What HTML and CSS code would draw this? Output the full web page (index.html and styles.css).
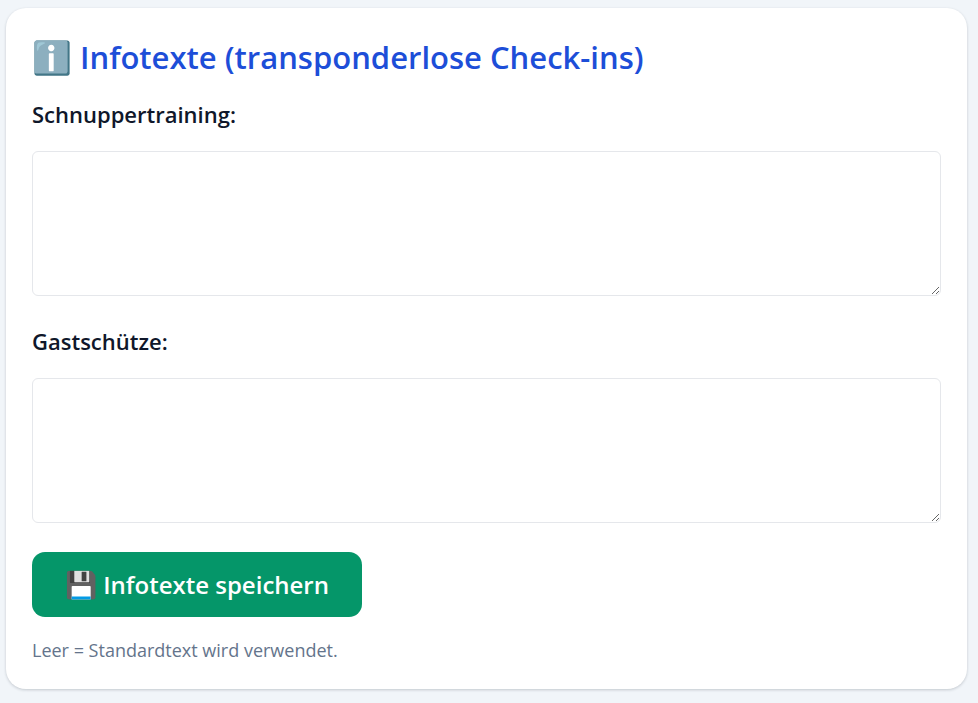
FILE: index.html
```html
<!DOCTYPE html>
<html lang="de">
<head>
<meta charset="utf-8">
<title>Infotexte</title>
<link rel="stylesheet" href="styles.css">
</head>
<body>
<main class="card">
  <h2 class="title"><span class="title-icon">ℹ️</span> Infotexte (transponderlose Check-ins)</h2>
  <form class="form">
    <label class="label" for="trial">Schnuppertraining:</label>
    <textarea class="field" id="trial"></textarea>
    <label class="label" for="guest">Gastschütze:</label>
    <textarea class="field" id="guest"></textarea>
    <button class="save" type="button"><span class="save-icon">💾</span> Infotexte speichern</button>
    <p class="hint">Leer = Standardtext wird verwendet.</p>
  </form>
</main>
</body>
</html>
```
FILE: styles.css
```css
* { box-sizing: border-box; }
body { margin: 0; padding: 8px 11px 14px 6px; background: #f1f5f9; font-family: "Open Sans", "Noto Sans", sans-serif; color: #0f172a; }
.card { background: #fff; border-radius: 20px; padding: 25px 26px 26px; box-shadow: 0 1px 3px rgba(15, 23, 42, .2); }
.title { margin: 0 0 16px; font-size: 31px; line-height: 48px; font-weight: 600; color: #1d4ed8; }
.title-icon { font-size: 32px; line-height: 1; }
.form { display: flex; flex-direction: column; align-items: flex-start; }
.label { margin-bottom: 20px; font-size: 22px; line-height: 34px; font-weight: 600; }
.field { width: 100%; height: 145px; margin: 0 0 28px; border: 1px solid #e5e7eb; border-radius: 6px; resize: vertical; }
.save { margin-top: 1px; border: 0; border-radius: 13px; background: #059669; color: #fff; font: inherit; font-size: 24px; line-height: 37px; font-weight: 600; padding: 14px 33px; }
.save-icon { font-size: 26px; line-height: 1; }
.hint { margin: 21px 0 0; font-size: 18px; line-height: 25px; color: #64748b; }
```
